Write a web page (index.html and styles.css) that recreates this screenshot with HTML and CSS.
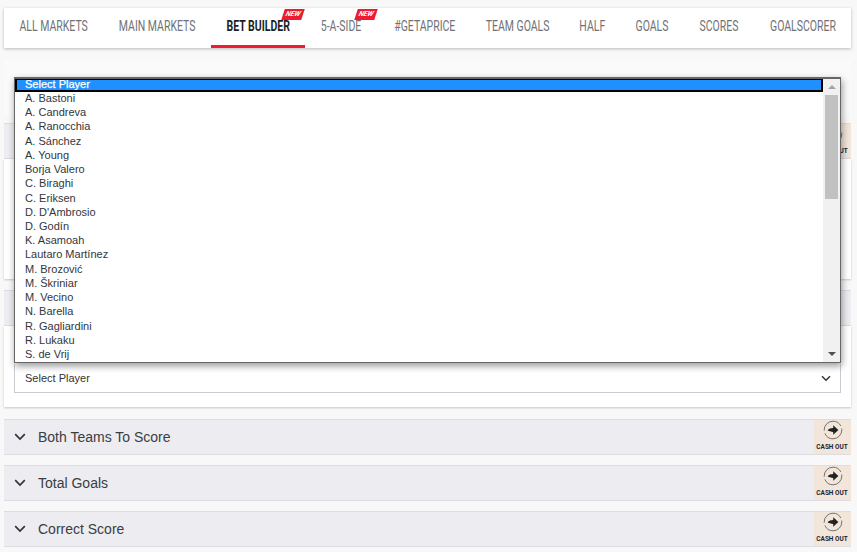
FILE: index.html
```html
<!DOCTYPE html>
<html lang="en">
<head>
<meta charset="utf-8">
<title>Markets</title>
<link rel="stylesheet" href="styles.css">
</head>
<body>
<nav class="tabs">
  <a class="tab"><span class="label">ALL MARKETS</span></a>
  <a class="tab"><span class="label">MAIN MARKETS</span></a>
  <a class="tab active"><span class="label">BET BUILDER</span><span class="new">NEW</span></a>
  <a class="tab"><span class="label">5-A-SIDE</span><span class="new">NEW</span></a>
  <a class="tab"><span class="label">#GETAPRICE</span></a>
  <a class="tab"><span class="label">TEAM GOALS</span></a>
  <a class="tab"><span class="label">HALF</span></a>
  <a class="tab"><span class="label">GOALS</span></a>
  <a class="tab"><span class="label">SCORES</span></a>
  <a class="tab"><span class="label">GOALSCORER</span></a>
</nav>
<main class="content">
  <section class="panel-top"></section>
  <section class="market-open">
    <header class="market-head"><span class="cash"><svg class="cash-icon" viewBox="0 0 20 20"><circle cx="10" cy="10" r="8.8" class="ring"/><path class="arrow" d="M4.6 10.4c1.3-1.8 3.2-2.5 5.6-2.5V5.2l5.2 4.9-5.2 4.7v-2.9c-2.3-.3-4-.9-5.6-1.5z"/></svg><b>CASH OUT</b></span></header>
    <div class="market-body"></div>
  </section>
  <section class="market-open second">
    <header class="market-head"></header>
    <div class="market-body last">
      <div class="select-box">Select Player<svg class="chev small" viewBox="0 0 12 8"><path d="M1.2 1.2 6 6l4.8-4.8"/></svg></div>
    </div>
  </section>
  <section class="market first-closed"><svg class="chev" viewBox="0 0 12 8"><path d="M1.2 1.2 6 6l4.8-4.8"/></svg><span class="market-title">Both Teams To Score</span><span class="cash"><svg class="cash-icon" viewBox="0 0 20 20"><circle cx="10" cy="10" r="8.8" class="ring"/><path class="arrow" d="M4.6 10.4c1.3-1.8 3.2-2.5 5.6-2.5V5.2l5.2 4.9-5.2 4.7v-2.9c-2.3-.3-4-.9-5.6-1.5z"/></svg><b>CASH OUT</b></span></section>
  <section class="market"><svg class="chev" viewBox="0 0 12 8"><path d="M1.2 1.2 6 6l4.8-4.8"/></svg><span class="market-title">Total Goals</span><span class="cash"><svg class="cash-icon" viewBox="0 0 20 20"><circle cx="10" cy="10" r="8.8" class="ring"/><path class="arrow" d="M4.6 10.4c1.3-1.8 3.2-2.5 5.6-2.5V5.2l5.2 4.9-5.2 4.7v-2.9c-2.3-.3-4-.9-5.6-1.5z"/></svg><b>CASH OUT</b></span></section>
  <section class="market"><svg class="chev" viewBox="0 0 12 8"><path d="M1.2 1.2 6 6l4.8-4.8"/></svg><span class="market-title">Correct Score</span><span class="cash"><svg class="cash-icon" viewBox="0 0 20 20"><circle cx="10" cy="10" r="8.8" class="ring"/><path class="arrow" d="M4.6 10.4c1.3-1.8 3.2-2.5 5.6-2.5V5.2l5.2 4.9-5.2 4.7v-2.9c-2.3-.3-4-.9-5.6-1.5z"/></svg><b>CASH OUT</b></span></section>
</main>
<div class="dropdown">
  <ul class="options">
    <li class="selected">Select Player</li>
    <li>A. Bastoni</li>
    <li>A. Candreva</li>
    <li>A. Ranocchia</li>
    <li>A. Sánchez</li>
    <li>A. Young</li>
    <li>Borja Valero</li>
    <li>C. Biraghi</li>
    <li>C. Eriksen</li>
    <li>D. D'Ambrosio</li>
    <li>D. Godín</li>
    <li>K. Asamoah</li>
    <li>Lautaro Martínez</li>
    <li>M. Brozović</li>
    <li>M. Škriniar</li>
    <li>M. Vecino</li>
    <li>N. Barella</li>
    <li>R. Gagliardini</li>
    <li>R. Lukaku</li>
    <li>S. de Vrij</li>
  </ul>
  <div class="scrollbar">
    <span class="sb-up"></span>
    <span class="sb-thumb"></span>
    <span class="sb-down"></span>
  </div>
</div>
</body>
</html>
```
FILE: styles.css
```css
* { box-sizing: border-box; }
html, body { margin: 0; padding: 0; }
body {
  width: 857px; height: 552px; overflow: hidden; position: relative;
  background: #f8f8f8; color: #333;
  font-family: "Liberation Sans", Arial, sans-serif;
  padding: 8px 6px 0 4px;
}
.tabs {
  display: grid; height: 40px; background: #fff;
  grid-template-columns: 99.5px 107.5px 94px 72.5px 94px 92.5px 57.5px 62px 71px 96px;
  box-shadow: 0 1px 3px rgba(0,0,0,.25);
}
.tab {
  position: relative; display: flex; align-items: center; justify-content: center;
  padding-bottom: 5px; height: 40px; min-width: 0;
  color: #6f7276; white-space: nowrap;
}
.label { display: block; font: 400 14px "Roboto", sans-serif; transform: scaleX(.75); }
.tab.active { color: #1b1e24; border-bottom: 3px solid #ee1c2e; padding-bottom: 2px; }
.tab.active .label { font-weight: 700; transform: scaleX(.75); }
.new {
  position: absolute; top: 1px; right: 2px; width: 20px; height: 11px;
  background: #ee1c2e; color: #fff; font: italic 700 7px/11px "Roboto", sans-serif;
  text-align: center; transform: skewX(-18deg);
}
.content { margin-top: 12px; }
.panel-top { height: 55px; background: #fafafa; margin-bottom: 8px; }
.market-open { background: #fff; }
.market-head {
  height: 36px; background: #edecf1;
  border-top: 1px solid #dcdde3; border-bottom: 1px solid #dcdde3;
  display: flex; justify-content: flex-end;
}
.market-body { height: 120px; background: #fff; box-shadow: 0 1px 2px rgba(0,0,0,.2); }
.market-body.last { height: 81px; padding: 38px 10px 0; }
.second { margin-top: 11px; }
.select-box {
  height: 29px; border: 1px solid #c8ccd2; border-top: 0;
  display: flex; align-items: center; justify-content: space-between;
  padding: 0 9px 0 10px; font-size: 11px; color: #333;
}
.market {
  height: 36px; margin-top: 10px; background: #edecf1;
  border-top: 1px solid #dcdde3; border-bottom: 1px solid #dcdde3;
  display: flex; align-items: center;
}
.first-closed { margin-top: 12px; }
.chev { width: 12px; height: 8px; margin-left: 10px; fill: none; stroke: #333; stroke-width: 1.7; }
.chev.small { width: 10px; height: 7px; margin: 0; }
.market-title { margin-left: 12px; font-size: 14px; color: #3a3d42; }
.cash {
  margin-left: auto; width: 37px; height: 34px; background: #f2e5d9;
  display: flex; flex-direction: column; align-items: center;
}
.cash b { font: 700 7px/8px "Roboto", sans-serif; color: #1b2430; margin-top: 3px; white-space: nowrap; transform: scaleX(.92); }
.cash-icon { width: 20px; height: 20px; flex: none; }
.ring { fill: none; stroke: #555; stroke-width: .8; stroke-dasharray: 24 2.7; }
.arrow { fill: #222; }
.dropdown {
  position: absolute; left: 14px; top: 77px; width: 827px; height: 286px;
  background: #fff; border: 1px solid #666; border-top-width: 2px;
  box-shadow: 1px 3px 7px rgba(0,0,0,.4);
  display: flex; overflow: hidden;
}
.options { list-style: none; margin: 0; padding: 0; flex: 1; min-width: 0; font-size: 11px; color: #33363b; }
.options li { height: 14.22px; line-height: 13px; padding-left: 10px; white-space: nowrap; }
.options li.selected {
  height: 13px; background: #1e90ff; color: #fff; -webkit-text-stroke: .25px #fff;
  border: 2px solid #000; border-top-width: 1px; padding-left: 8px; line-height: 9px;
  overflow: hidden;
}
.scrollbar { width: 17px; flex: none; background: #f1f1f1; display: flex; flex-direction: column; align-items: center; }
.sb-up { width: 0; height: 0; border: 4px solid transparent; border-top: 0; border-bottom: 4px solid #a3a3a3; margin-top: 6px; }
.sb-thumb { width: 13px; height: 104px; background: #c1c1c1; margin-top: 6px; }
.sb-down { width: 0; height: 0; border: 4px solid transparent; border-bottom: 0; border-top: 4px solid #505050; margin-top: auto; margin-bottom: 6px; }
```
